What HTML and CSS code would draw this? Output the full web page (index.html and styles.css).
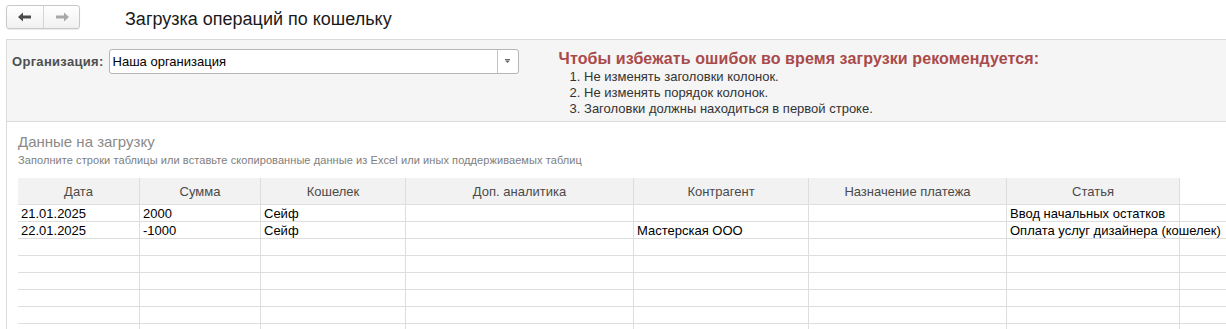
FILE: index.html
```html
<!DOCTYPE html>
<html lang="ru">
<head>
  <meta charset="utf-8">
  <title>Загрузка операций по кошельку</title>
  <link rel="stylesheet" href="styles.css">
</head>
<body>
  <header class="topbar">
    <div class="nav">
      <button class="nav-btn" type="button" title="Назад">
        <svg width="14" height="10" viewBox="0 0 14 10"><path d="M0 5 L5 0.5 L5 3.5 L13 3.5 L13 6.5 L5 6.5 L5 9.5 Z" fill="#4a4a4a"/></svg>
      </button>
      <button class="nav-btn" type="button" title="Вперёд">
        <svg width="14" height="10" viewBox="0 0 14 10"><path d="M14 5 L9 0.5 L9 3.5 L1 3.5 L1 6.5 L9 6.5 L9 9.5 Z" fill="#a8a8a8"/></svg>
      </button>
    </div>
    <h1 class="title">Загрузка операций по кошельку</h1>
  </header>

  <main class="form">
    <section class="panel">
      <div class="org">
        <label class="org-label" for="org">Организация:</label>
        <div class="select">
          <input id="org" type="text" value="Наша организация">
          <span class="select-btn"><svg width="5" height="4" viewBox="0 0 5 4"><path d="M0 0 H5 V1 H0 Z M0 1.5 H5 L2.5 4 Z" fill="#666"/></svg></span>
        </div>
      </div>
      <div class="note">
        <h2 class="note-title">Чтобы избежать ошибок во время загрузки рекомендуется:</h2>
        <ol class="note-list">
          <li>Не изменять заголовки колонок.</li>
          <li>Не изменять порядок колонок.</li>
          <li>Заголовки должны находиться в первой строке.</li>
        </ol>
      </div>
    </section>

    <section class="data">
      <h3 class="data-title">Данные на загрузку</h3>
      <p class="data-hint">Заполните строки таблицы или вставьте скопированные данные из Excel или иных поддерживаемых таблиц</p>
      <div class="grid-wrap">
        <table class="grid">
          <thead>
            <tr>
              <th class="c-date">Дата</th>
              <th class="c-sum">Сумма</th>
              <th class="c-wallet">Кошелек</th>
              <th class="c-extra">Доп. аналитика</th>
              <th class="c-partner">Контрагент</th>
              <th class="c-purpose">Назначение платежа</th>
              <th class="c-item">Статья</th>
              <th class="c-rest"></th>
            </tr>
          </thead>
          <tbody>
            <tr><td>21.01.2025</td><td>2000</td><td>Сейф</td><td></td><td></td><td></td><td>Ввод начальных остатков</td><td></td></tr>
            <tr><td>22.01.2025</td><td>-1000</td><td>Сейф</td><td></td><td>Мастерская ООО</td><td></td><td>Оплата услуг дизайнера (кошелек)</td><td></td></tr>
            <tr><td></td><td></td><td></td><td></td><td></td><td></td><td></td><td></td></tr>
            <tr><td></td><td></td><td></td><td></td><td></td><td></td><td></td><td></td></tr>
            <tr><td></td><td></td><td></td><td></td><td></td><td></td><td></td><td></td></tr>
            <tr><td></td><td></td><td></td><td></td><td></td><td></td><td></td><td></td></tr>
            <tr><td></td><td></td><td></td><td></td><td></td><td></td><td></td><td></td></tr>
            <tr><td></td><td></td><td></td><td></td><td></td><td></td><td></td><td></td></tr>
          </tbody>
        </table>
      </div>
    </section>
  </main>
</body>
</html>
```

FILE: styles.css
```css
* { box-sizing: border-box; }
body { margin: 0; font-family: "Liberation Sans", Arial, sans-serif; font-size: 13px; color: #000; background: #fff; overflow: hidden; }

.topbar { display: flex; align-items: flex-start; height: 39px; }
.nav { display: flex; margin: 5px 0 0 6px; height: 24px; border: 1px solid #c8c8c8; border-radius: 3px; background: linear-gradient(#ffffff, #f1f1f1); box-shadow: 0 1px 1px rgba(0,0,0,0.08); }
.nav-btn { width: 36px; height: 22px; border: 0; padding: 0; background: none; display: flex; align-items: center; justify-content: center; }
.nav-btn + .nav-btn { border-left: 1px solid #d6d6d6; }
.title { margin: 8px 0 0 45px; font-size: 18px; font-weight: normal; line-height: 22px; color: #1a1a1a; }

.form { margin-left: 6px; border-left: 1px solid #dcdcdc; height: 290px; }

.panel { display: flex; align-items: flex-start; height: 83px; padding: 9px 0 0 5px; background: #f5f5f5; border-top: 1px solid #dadada; border-bottom: 1px solid #dadada; }
.org { display: flex; align-items: center; }
.org-label { font-weight: bold; color: #4f4f4f; margin-right: 5px; letter-spacing: 0.3px; }
.select { display: flex; width: 410px; height: 25px; background: #fff; border: 1px solid #b5b5b5; border-radius: 3px; }
.select input { flex: 1; min-width: 0; border: 0; padding: 0 0 0 3px; font: inherit; color: #000; background: none; outline: none; }
.select-btn { width: 21px; border-left: 1px solid #c4c4c4; display: flex; align-items: center; justify-content: center; padding-bottom: 1px; }

.note { margin: 1px 0 0 40px; }
.note-title { margin: 0; font-size: 16px; line-height: 18px; font-weight: bold; color: #a94a4a; letter-spacing: 0.1px; }
.note-list { margin: 1px 0 0; padding: 0 0 0 11px; list-style-position: inside; line-height: 16px; color: #333; }

.data { padding: 11px 0 0 11px; }
.data-title { margin: 0; font-size: 15px; font-weight: normal; line-height: 18px; color: #8a8a8a; }
.data-hint { margin: 2px 0 11px; font-size: 11px; line-height: 14px; color: #7e7e7e; letter-spacing: 0.08px; }

.grid-wrap { overflow: hidden; }
.grid { table-layout: fixed; width: 1222px; border-collapse: separate; border-spacing: 0; }
.grid thead tr { height: 27px; }
.grid tbody tr { height: 17px; }
.grid th { padding: 0 3px; background: #f2f2f2; font-weight: normal; color: #4a4a4a; text-align: center; border-right: 1px solid #dedede; border-bottom: 1px solid #dedede; }
.grid th.c-rest { background: #fff; }
.grid td { padding: 0 3px; line-height: 15px; white-space: nowrap; overflow: visible; border-right: 1px solid #dedede; border-bottom: 1px solid #dedede; }
.grid td:last-child, .grid th:last-child { border-right: 0; }

.c-date { width: 122px; }
.c-sum { width: 121px; }
.c-wallet { width: 145px; }
.c-extra { width: 228px; }
.c-partner { width: 175px; }
.c-purpose { width: 198px; }
.c-item { width: 173px; }
.c-rest { width: 60px; }
```
